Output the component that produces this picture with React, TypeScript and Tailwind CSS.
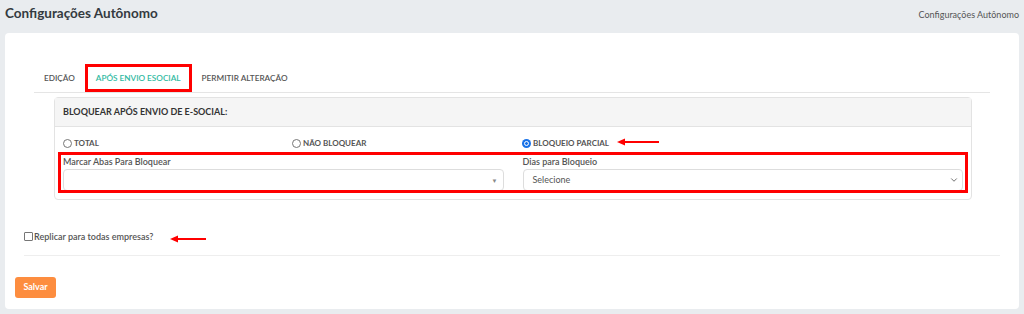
import { ChevronDown } from "lucide-react";

function Arrow({ width }: { width: number }) {
  return (
    <svg width={width} height="8" viewBox={`0 0 ${width} 8`} className="block">
      <path d={`M0 4 L8 0.5 L8 7.5 Z`} fill="#f00" />
      <rect x="6" y="3" width={width - 6} height="2" fill="#f00" />
    </svg>
  );
}

function Radio({ label, checked }: { label: string; checked?: boolean }) {
  return (
    <label className="flex items-center gap-[2px] text-[8px] font-bold text-[#555]">
      {checked ? (
        <span className="flex h-[9px] w-[9px] items-center justify-center rounded-full bg-[#1a73e8]">
          <span className="h-[5px] w-[5px] rounded-full border border-white bg-[#1a73e8]" />
        </span>
      ) : (
        <span className="h-[9px] w-[9px] rounded-full border border-[#767676] bg-white" />
      )}
      {label}
    </label>
  );
}

export default function App() {
  return (
    <div
      className="h-[314px] w-full overflow-hidden bg-[#e9ecef] px-[5px]"
      style={{ fontFamily: "Lato, 'Noto Sans', sans-serif" }}
    >
      <div className="flex h-[33px] items-center justify-between pb-[6px]">
        <h1 className="text-[13.5px] font-bold text-[#343a40]">Configurações Autônomo</h1>
        <span className="mt-[3px] text-[9px] text-[#555]">Configurações Autônomo</span>
      </div>

      <div className="h-[276px] rounded bg-white px-[10px] pt-[31px]">
        {/* tabs */}
        <div className="mx-[19px]">
          <div className="flex h-[29px] border-b border-[#e5e5e5] text-[8.2px] font-semibold uppercase">
            <div className="flex items-center px-[10px] pt-[1px] text-[#555]">Edição</div>
            <div className="flex items-center border-[3px] border-[#f00] px-[8px] pt-[1px] text-[#2fb99f]">
              Após Envio eSocial
            </div>
            <div className="flex items-center px-[10px] pt-[1px] text-[#555]">Permitir Alteração</div>
          </div>

          {/* panel */}
          <div className="ml-[20px] mr-[18px] mt-[4px] rounded-sm border border-[#e3e3e3]">
            <div className="flex h-[29px] items-center border-b border-[#e3e3e3] bg-[#f5f5f5] px-[8px] text-[9px] font-bold text-[#333]">
              BLOQUEAR APÓS ENVIO DE E-SOCIAL:
            </div>
            <div className="px-[8px] pb-[8px] pt-[10px]">
              <div className="flex items-center">
                <div className="w-[229px]">
                  <Radio label="TOTAL" />
                </div>
                <div className="w-[230px]">
                  <Radio label="NÃO BLOQUEAR" />
                </div>
                <div className="flex items-center gap-[8px]">
                  <Radio label="BLOQUEIO PARCIAL" checked />
                  <div className="mt-[-2px]">
                    <Arrow width={42} />
                  </div>
                </div>
              </div>

              <div className="relative mt-[7px] grid grid-cols-2 gap-x-[19px]">
                <div>
                  <div className="pb-[1px] text-[9px] font-semibold leading-[12px] text-[#555]">
                    Marcar Abas Para Bloquear
                  </div>
                  <div className="flex h-[22px] items-center justify-end rounded-sm border border-[#ddd] pr-[5px]">
                    <span className="text-[6px] text-[#888]">▼</span>
                  </div>
                </div>
                <div>
                  <div className="pb-[1px] text-[9px] font-semibold leading-[12px] text-[#555]">
                    Dias para Bloqueio
                  </div>
                  <div className="flex h-[22px] items-center justify-between rounded-sm border border-[#ddd] pl-[9px] pr-[3px] text-[9px] text-[#555]">
                    Selecione
                    <ChevronDown size={10} strokeWidth={2} className="text-[#555]" />
                  </div>
                </div>
                <div className="pointer-events-none absolute bottom-[-2px] left-[-5px] right-[-5px] top-[-4px] border-[3px] border-[#f00]" />
              </div>
            </div>
          </div>
        </div>

        {/* replicar */}
        <div className="mx-[9px] mt-[30px] flex items-center border-b border-[#eee] pb-[11px]">
          <span className="mr-[1px] h-[9px] w-[9px] rounded-[1px] border border-[#767676]" />
          <span className="text-[9px] font-semibold text-[#555]">Replicar para todas empresas?</span>
          <div className="ml-[17px] mt-[4px]">
            <Arrow width={36} />
          </div>
        </div>

        <button
          type="button"
          className="mt-[21px] h-[21px] w-[41px] rounded-[3px] bg-[#fd8d3f] text-[9px] font-bold text-white"
        >
          Salvar
        </button>
      </div>
    </div>
  );
}
